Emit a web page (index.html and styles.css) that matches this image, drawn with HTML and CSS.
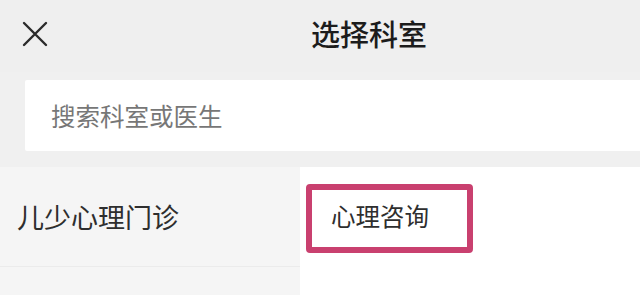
FILE: index.html
```html
<!DOCTYPE html>
<html lang="zh-CN">
<head>
<meta charset="utf-8">
<title>选择科室</title>
<link rel="stylesheet" href="styles.css">
</head>
<body>
<div class="page">
  <header class="topbar">
    <span class="close" aria-label="关闭">
      <svg width="26" height="26" viewBox="0 0 26 26"><path d="M2 2 L24 24 M24 2 L2 24" stroke="#2b2b2b" stroke-width="2.4" stroke-linecap="round" fill="none"/></svg>
    </span>
    <h1 class="title">选择科室</h1>
  </header>
  <div class="search-wrap">
    <div class="search">搜索科室或医生</div>
  </div>
  <div class="content">
    <nav class="sidebar">
      <div class="dept">儿少心理门诊</div>
      <div class="dept empty"></div>
    </nav>
    <main class="main">
      <div class="sub">心理咨询</div>
    </main>
  </div>
</div>
</body>
</html>
```
FILE: styles.css
```css
html, body {
  margin: 0;
  padding: 0;
}
body {
  background: #efefef;
  font-family: "Noto Sans CJK SC", "Noto Sans", sans-serif;
  width: 640px;
  height: 295px;
  overflow: hidden;
}
.page {
  display: flex;
  flex-direction: column;
  height: 295px;
}
.topbar {
  height: 72px;
  display: flex;
  align-items: center;
  padding-left: 22px;
  background: #efefef;
  box-sizing: border-box;
}
.close {
  display: flex;
  width: 26px;
  height: 26px;
  margin-top: -4px;
}
.title {
  margin: -6px 0 0 263px;
  font-size: 29px;
  font-weight: 500;
  color: #1c1c1c;
  line-height: 1;
  letter-spacing: 0;
}
.search-wrap {
  padding: 8px 0 16px 25px;
  background: #f0f0f0;
}
.search {
  height: 71px;
  background: #fff;
  display: flex;
  align-items: center;
  padding-left: 26px;
  font-size: 24.5px;
  color: #777;
  border-radius: 2px 0 0 2px;
}
.content {
  flex: 1;
  display: flex;
}
.sidebar {
  width: 300px;
  background: #f5f5f5;
  display: flex;
  flex-direction: column;
}
.dept {
  height: 100px;
  box-sizing: border-box;
  border-bottom: 1px solid #ebebeb;
  display: flex;
  align-items: center;
  padding-left: 17px;
  font-size: 27px;
  color: #2e2e2e;
}
.dept.empty {
  border-bottom: none;
  flex: 1;
}
.main {
  flex: 1;
  background: #fff;
  padding: 17px 0 0 6px;
}
.sub {
  width: 167px;
  height: 69px;
  box-sizing: border-box;
  border: 6px solid #c9406f;
  border-radius: 4px;
  display: flex;
  align-items: center;
  padding-left: 19px;
  padding-bottom: 6px;
  font-size: 24.5px;
  color: #2e2e2e;
}
```
